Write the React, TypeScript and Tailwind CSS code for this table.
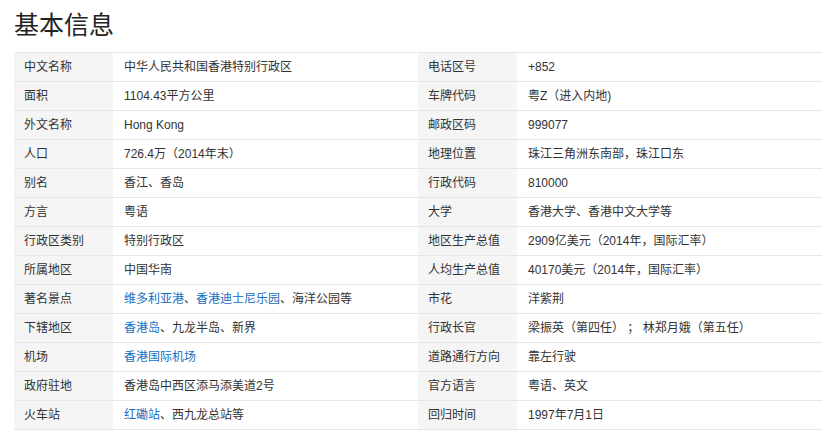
type Part = string | { link: string }

type Row = { label: string; value: Part[] }

const leftRows: Row[] = [
  { label: '中文名称', value: ['中华人民共和国香港特别行政区'] },
  { label: '面积', value: ['1104.43平方公里'] },
  { label: '外文名称', value: ['Hong Kong'] },
  { label: '人口', value: ['726.4万（2014年末）'] },
  { label: '别名', value: ['香江、香岛'] },
  { label: '方言', value: ['粤语'] },
  { label: '行政区类别', value: ['特别行政区'] },
  { label: '所属地区', value: ['中国华南'] },
  { label: '著名景点', value: [{ link: '维多利亚港' }, '、', { link: '香港迪士尼乐园' }, '、海洋公园等'] },
  { label: '下辖地区', value: [{ link: '香港岛' }, '、九龙半岛、新界'] },
  { label: '机场', value: [{ link: '香港国际机场' }] },
  { label: '政府驻地', value: ['香港岛中西区添马添美道2号'] },
  { label: '火车站', value: [{ link: '红磡站' }, '、西九龙总站等'] },
]

const rightRows: Row[] = [
  { label: '电话区号', value: ['+852'] },
  { label: '车牌代码', value: ['粤Z（进入内地)'] },
  { label: '邮政区码', value: ['999077'] },
  { label: '地理位置', value: ['珠江三角洲东南部，珠江口东'] },
  { label: '行政代码', value: ['810000'] },
  { label: '大学', value: ['香港大学、香港中文大学等'] },
  { label: '地区生产总值', value: ['2909亿美元（2014年，国际汇率）'] },
  { label: '人均生产总值', value: ['40170美元（2014年，国际汇率）'] },
  { label: '市花', value: ['洋紫荆'] },
  { label: '行政长官', value: ['梁振英（第四任） ； 林郑月娥（第五任）'] },
  { label: '道路通行方向', value: ['靠左行驶'] },
  { label: '官方语言', value: ['粤语、英文'] },
  { label: '回归时间', value: ['1997年7月1日'] },
]

function InfoTable({ rows }: { rows: Row[] }) {
  return (
    <dl className="border-t border-[#e6e6e6]">
      {rows.map((row) => (
        <div key={row.label} className="flex h-[29px] border-b border-[#e6e6e6]">
          <dt className="w-[99px] shrink-0 bg-[#f5f5f5] pl-[10px] leading-[28px]">{row.label}</dt>
          <dd className="pl-[11px] leading-[28px] whitespace-pre">
            {row.value.map((part, i) =>
              typeof part === 'string' ? (
                <span key={i}>{part}</span>
              ) : (
                <a key={i} href="#" className="text-[#136ec2] no-underline">
                  {part.link}
                </a>
              )
            )}
          </dd>
        </div>
      ))}
    </dl>
  )
}

export default function App() {
  return (
    <div
      className="w-[836px] h-[444px] bg-white px-[14px] text-[12px] text-[#333]"
      style={{ fontFamily: '"Liberation Sans", "Noto Sans CJK SC", sans-serif' }}
    >
      <h2 className="h-[52px] leading-[50px] text-[25px] font-normal text-[#222]">基本信息</h2>
      <div className="grid grid-cols-2 w-[808px]">
        <InfoTable rows={leftRows} />
        <InfoTable rows={rightRows} />
      </div>
    </div>
  )
}
